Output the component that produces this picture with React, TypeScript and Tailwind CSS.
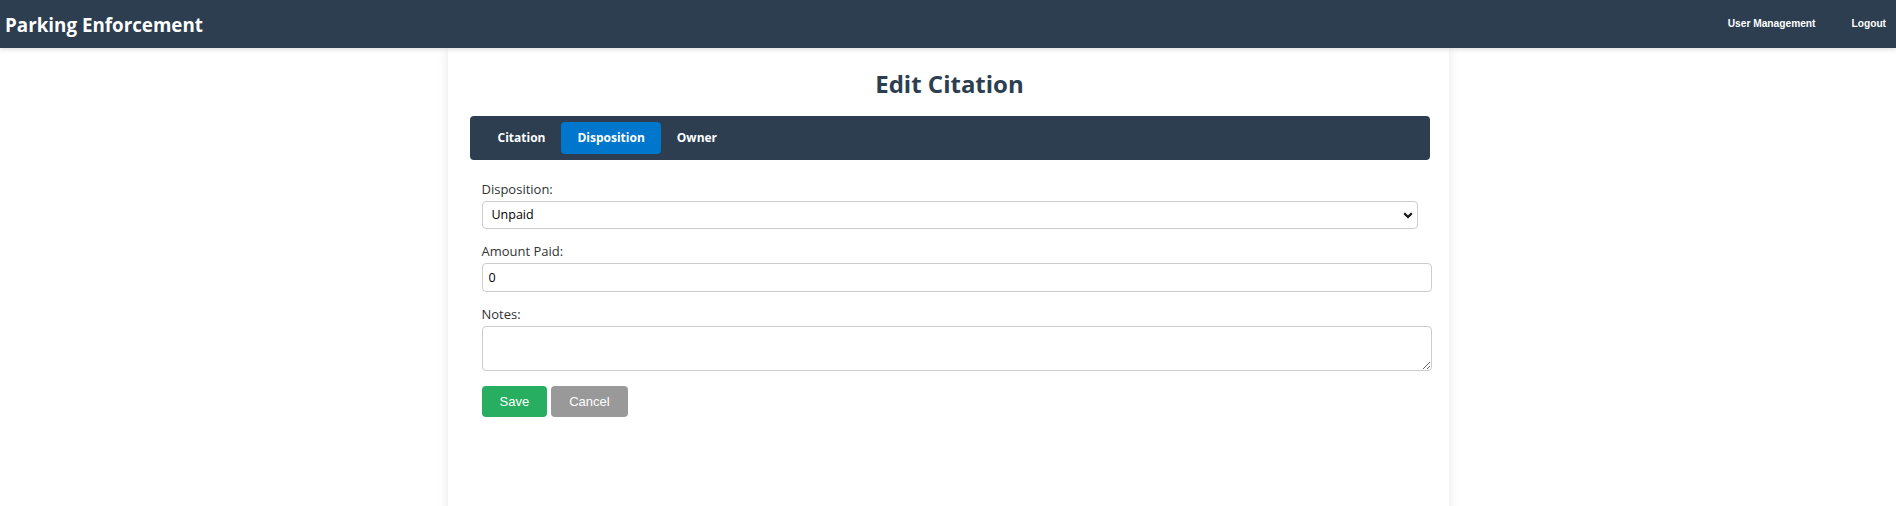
import React, { useState } from "react";

const tabs = ["Citation", "Disposition", "Owner"];

function Header() {
  return (
    <header className="relative z-10 flex h-[48px] items-center justify-between bg-[#2c3e50] pl-[5px] pr-[10px] shadow-[0_2px_4px_rgba(0,0,0,0.12)]">
      <h1 className="mt-[2px] font-['Open_Sans',sans-serif] text-[18.8px] font-bold text-white">
        Parking Enforcement
      </h1>
      <nav className="flex items-center gap-[36px] font-['Liberation_Sans',Arial,sans-serif] text-[10.2px] font-bold text-white">
        <a href="#">User Management</a>
        <a href="#">Logout</a>
      </nav>
    </header>
  );
}

export default function App() {
  const [active, setActive] = useState("Disposition");

  return (
    <div className="min-h-screen bg-white font-['Open_Sans',sans-serif]">
      <Header />
      <main className="mx-auto min-h-[500px] w-[1001px] bg-white pl-[22px] pr-[19px] pt-[20px] shadow-[0_0_10px_rgba(0,0,0,0.1)]">
        <h2 className="mb-[16px] text-center text-[24px] leading-[32px] font-bold text-[#2c3e50]">
          Edit Citation
        </h2>

        <div className="flex h-[44px] items-center rounded-[4px] bg-[#2c3e50] px-[12px]">
          {tabs.map((t) => (
            <button
              key={t}
              onClick={() => setActive(t)}
              className={
                active === t
                  ? "h-[32px] rounded-[4px] bg-[#0077cc] px-[16px] text-[12px] font-bold text-white"
                  : "h-[32px] rounded-[4px] px-[16px] text-[12px] font-bold text-white"
              }
            >
              {t}
            </button>
          ))}
        </div>

        <form className="px-[12px] pt-[20px]">
          <div className="mb-[13px]">
            <label className="mb-[3px] block text-[13px] leading-[18px] text-[#333]">Disposition:</label>
            <div className="relative">
              <select className="h-[28px] w-full appearance-none rounded-[4px] border border-[#ccc] bg-white pl-[9px] text-[12.5px] text-black">
                <option>Unpaid</option>
                <option>Paid</option>
                <option>Dismissed</option>
              </select>
              <svg
                className="pointer-events-none absolute right-[5px] top-[11px]"
                width="10"
                height="7"
                viewBox="0 0 10 7"
              >
                <path d="M1.2 1.2 L5 5 L8.8 1.2" fill="none" stroke="#111" strokeWidth="2.2" />
              </svg>
            </div>
          </div>

          <div className="mb-[13px]">
            <label className="mb-[3px] block text-[13px] leading-[18px] text-[#333]">Amount Paid:</label>
            <input
              type="text"
              defaultValue="0"
              className="box-content block h-[27px] w-full rounded-[4px] border border-[#ccc] px-[6px] py-0 text-[12.5px] text-black"
            />
          </div>

          <div className="mb-[15px]">
            <label className="mb-[3px] block text-[13px] leading-[18px] text-[#333]">Notes:</label>
            <textarea className="box-content block h-[43px] w-full rounded-[4px] border border-[#ccc] px-[6px] py-0 text-[12.5px]" />
          </div>

          <div className="flex gap-[4px] font-['Liberation_Sans',Arial,sans-serif] text-[13px] text-white">
            <button type="button" className="h-[31px] rounded-[4px] bg-[#27ae60] px-[18px]">
              Save
            </button>
            <button type="button" className="h-[31px] rounded-[4px] bg-[#999] px-[18px]">
              Cancel
            </button>
          </div>
        </form>
      </main>
    </div>
  );
}
